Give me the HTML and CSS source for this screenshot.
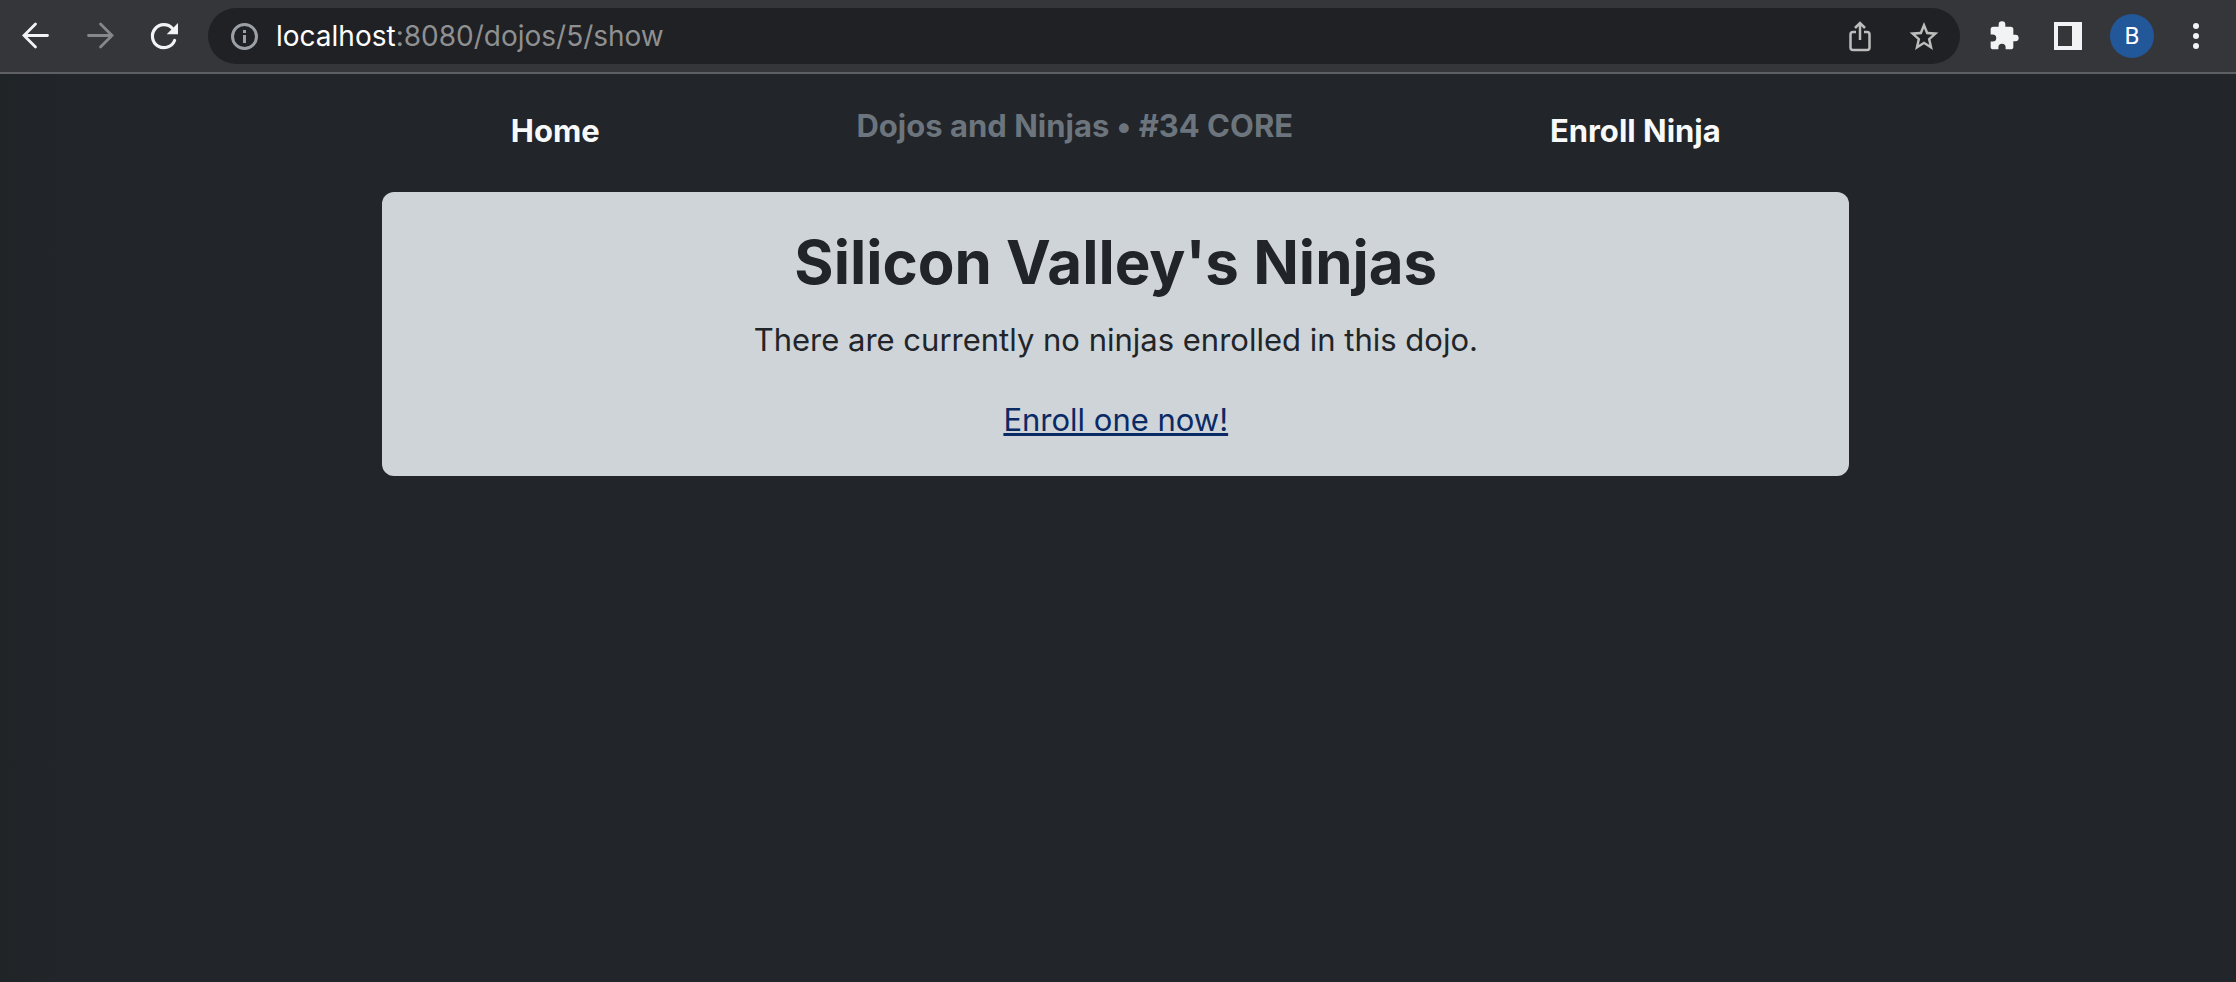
FILE: index.html
```html
<!DOCTYPE html>
<html lang="en">
<head>
<meta charset="utf-8">
<title>Dojos and Ninjas</title>
<link rel="stylesheet" href="styles.css">
</head>
<body>
<header class="toolbar">
  <div class="toolbar-nav">
    <button class="icon-button" aria-label="Back"><svg viewBox="0 0 32 32"><path d="M27.500 15.500H4M15.500 4 4 15.500 15.500 27" stroke-width="2.800" stroke-linecap="round"/></svg></button>
    <button class="icon-button dim" aria-label="Forward"><svg viewBox="0 0 32 32"><path d="M4.500 15.500H28M16.500 4 28 15.500 16.500 27" stroke-width="2.800" stroke-linecap="round"/></svg></button>
    <button class="icon-button" aria-label="Reload"><svg viewBox="0 0 32 32"><path d="M26.600 20.500A11.500 11.500 0 1 1 24.500 8.500" stroke-width="3.200" stroke-linecap="round"/><path class="solid" d="M30 3v11.300H18.700z"/></svg></button>
  </div>
  <div class="address">
    <svg class="info" viewBox="0 0 32 32" aria-hidden="true"><circle cx="16.500" cy="16.500" r="12" stroke-width="3"/><path d="M16.500 15v8M16.500 10v3" stroke-width="3"/></svg>
    <div class="url"><span class="host">localhost</span>:8080/dojos/5/show</div>
    <button class="icon-button muted" aria-label="Share"><svg viewBox="0 0 32 32"><path d="M12 12H9a2.500 2.500 0 0 0-2.500 2.500v13A2.500 2.500 0 0 0 9 30h14a2.500 2.500 0 0 0 2.500-2.500v-13A2.500 2.500 0 0 0 23 12h-3M16 20V3.500M11 8l5-5 5 5" stroke-width="2.500"/></svg></button>
    <button class="icon-button muted" aria-label="Bookmark"><svg viewBox="0 0 32 32"><path class="solid" fill-rule="evenodd" d="M30.400 12.600 20 11.700 16 2l-4 9.700L1.600 12.600l7.900 6.800L7.100 30 16 24.300 24.900 30l-2.400-10.600zM16 21.500l-5.200 3.200 1.400-6-4.600-4 6.100-.5L16 8.500l2.300 5.700 6.100.5-4.600 4 1.400 6z"/></svg></button>
  </div>
  <div class="toolbar-actions">
    <button class="icon-button" aria-label="Extensions"><svg viewBox="0 0 24 24"><path class="solid" d="M20.500 11H19V7a2 2 0 0 0-2-2h-4V3.500a2.500 2.500 0 0 0-5 0V5H4a2 2 0 0 0-2 2v3.800h1.500a2.700 2.700 0 0 1 0 5.400H2V20a2 2 0 0 0 2 2h3.800v-1.500a2.700 2.700 0 0 1 5.400 0V22H17a2 2 0 0 0 2-2v-4h1.500a2.500 2.500 0 0 0 0-5z"/></svg></button>
    <button class="icon-button" aria-label="Side panel"><svg viewBox="0 0 32 32"><path class="solid" fill-rule="evenodd" d="M2 2h28v28H2zM6 6v20h14V6z"/></svg></button>
    <button class="avatar" aria-label="Profile B">B</button>
    <button class="icon-button" aria-label="Menu"><svg viewBox="0 0 32 32"><g class="solid"><circle cx="16" cy="6" r="3"/><circle cx="16" cy="16" r="3"/><circle cx="16" cy="26" r="3"/></g></svg></button>
  </div>
</header>
<div class="page">
  <nav class="nav">
    <a class="nav-link" href="#">Home</a>
    <h2 class="nav-title">Dojos and Ninjas • #34 CORE</h2>
    <a class="nav-link" href="#">Enroll Ninja</a>
  </nav>
  <main class="card">
    <h1 class="card-title">Silicon Valley's Ninjas</h1>
    <p class="card-text">There are currently no ninjas enrolled in this dojo.</p>
    <a class="card-link" href="#">Enroll one now!</a>
  </main>
</div>
</body>
</html>
```
FILE: styles.css
```css
* {
  box-sizing: border-box;
}

body {
  margin: 0;
  min-height: 100vh;
  color: #212529;
  background: linear-gradient(to right, #1f2427, #222529 64px);
  font-family: Inter, "Liberation Sans", sans-serif;
  font-size: 31px;
  line-height: 48px;
}

button {
  padding: 0;
  border: 0;
  background: none;
  font-family: inherit;
}

.toolbar {
  display: flex;
  align-items: center;
  padding: 8px 24px 8px 20px;
  border-bottom: 2px solid #5f6064;
  background: #35363a;
}

.toolbar-nav {
  display: flex;
  gap: 32px;
  margin-right: 28px;
}

.icon-button {
  display: block;
  width: 32px;
  height: 32px;
  color: #f1f3f4;
}

.icon-button svg,
.info {
  display: block;
  width: 32px;
  height: 32px;
  fill: none;
  stroke: currentColor;
}

.icon-button .solid {
  fill: currentColor;
  stroke: none;
}

.icon-button.dim {
  color: #86878a;
}

.icon-button.muted {
  color: #bdbdbd;
}

.address {
  display: flex;
  flex: 1;
  align-items: center;
  gap: 32px;
  height: 56px;
  padding: 0 20px;
  border-radius: 28px;
  background: #202124;
}

.info {
  margin-right: -16px;
  color: #9aa0a6;
}

.url {
  flex: 1;
  color: #8f9092;
  font-size: 28px;
}

.host {
  color: #fff;
}

.toolbar-actions {
  display: flex;
  align-items: center;
  gap: 32px;
  margin-left: 28px;
}

.avatar {
  width: 44px;
  height: 44px;
  margin: 0 -6px;
  border-radius: 50%;
  color: #fff;
  background: #225799;
  font-family: Roboto, sans-serif;
  font-size: 24px;
}

.page {
  padding: 28px 17.3% 28px 17.1%;
}

.nav {
  display: flex;
  justify-content: space-around;
  align-items: center;
  margin-bottom: 32px;
}

.nav-link {
  color: #f8f9fa;
  font-weight: 700;
  text-decoration: none;
}

.nav-title {
  margin: 0 0 10px;
  color: #6c757d;
  font-size: 31px;
  font-weight: 700;
}

.card {
  padding: 32px;
  border-radius: 12px;
  background: #ced4d8;
  text-align: center;
}

.card-title {
  margin: 0 0 16px;
  font-size: 60px;
  font-weight: 700;
  line-height: 76px;
}

.card-text {
  margin: 0 0 32px;
}

.card-link {
  color: #0a2a66;
  text-decoration: underline;
  text-decoration-thickness: 3px;
}
```
